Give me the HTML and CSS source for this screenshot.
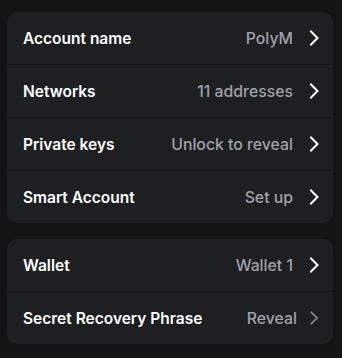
FILE: index.html
```html
<!DOCTYPE html>
<html>
<head>
<meta charset="utf-8">
<link rel="stylesheet" href="styles.css">
</head>
<body>
<div class="page">
  <div class="card">
    <div class="row">
      <span class="label">Account name</span>
      <span class="value">PolyM</span>
      <svg class="chev" viewBox="0 0 10 16"><path d="M2 1.5 L8.5 8 L2 14.5" /></svg>
    </div>
    <div class="row">
      <span class="label">Networks</span>
      <span class="value">11 addresses</span>
      <svg class="chev" viewBox="0 0 10 16"><path d="M2 1.5 L8.5 8 L2 14.5" /></svg>
    </div>
    <div class="row">
      <span class="label">Private keys</span>
      <span class="value">Unlock to reveal</span>
      <svg class="chev" viewBox="0 0 10 16"><path d="M2 1.5 L8.5 8 L2 14.5" /></svg>
    </div>
    <div class="row">
      <span class="label">Smart Account</span>
      <span class="value">Set up</span>
      <svg class="chev" viewBox="0 0 10 16"><path d="M2 1.5 L8.5 8 L2 14.5" /></svg>
    </div>
  </div>
  <div class="card">
    <div class="row">
      <span class="label">Wallet</span>
      <span class="value">Wallet 1</span>
      <svg class="chev" viewBox="0 0 10 16"><path d="M2 1.5 L8.5 8 L2 14.5" /></svg>
    </div>
    <div class="row">
      <span class="label">Secret Recovery Phrase</span>
      <span class="value value-tight">Reveal</span>
      <svg class="chev muted" viewBox="0 0 10 16"><path d="M2.5 2.5 L8 8 L2.5 13.5" /></svg>
    </div>
  </div>
</div>
</body>
</html>
```
FILE: styles.css
```css
html, body {
  margin: 0;
  padding: 0;
  background: #141415;
}
body {
  font-family: Inter, "Noto Sans", sans-serif;
  width: 342px;
  height: 358px;
  overflow: hidden;
}
.page {
  padding: 12px 9px 0 7px;
  display: flex;
  flex-direction: column;
  gap: 16px;
}
.card {
  background: #1e1f21;
  border-radius: 10px;
  display: flex;
  flex-direction: column;
  overflow: hidden;
}
.row {
  height: 52px;
  display: flex;
  align-items: center;
  padding: 0 14px 0 16px;
  border-top: 1px solid #141516;
}
.row:first-child {
  border-top: none;
}
.label {
  flex: 1;
  color: #ffffff;
  font-size: 15.5px;
  font-weight: 600;
}
.value {
  color: #9ea3ab;
  font-size: 15.8px;
  font-weight: 500;
  margin-right: 16px;
}
.value-tight {
  margin-right: 12px;
}
.chev {
  width: 10px;
  height: 16px;
  flex: none;
  fill: none;
  stroke: #ffffff;
  stroke-width: 2;
  stroke-linecap: square;
}
.chev.muted {
  stroke: #8e9299;
  stroke-width: 1.6;
}
```
